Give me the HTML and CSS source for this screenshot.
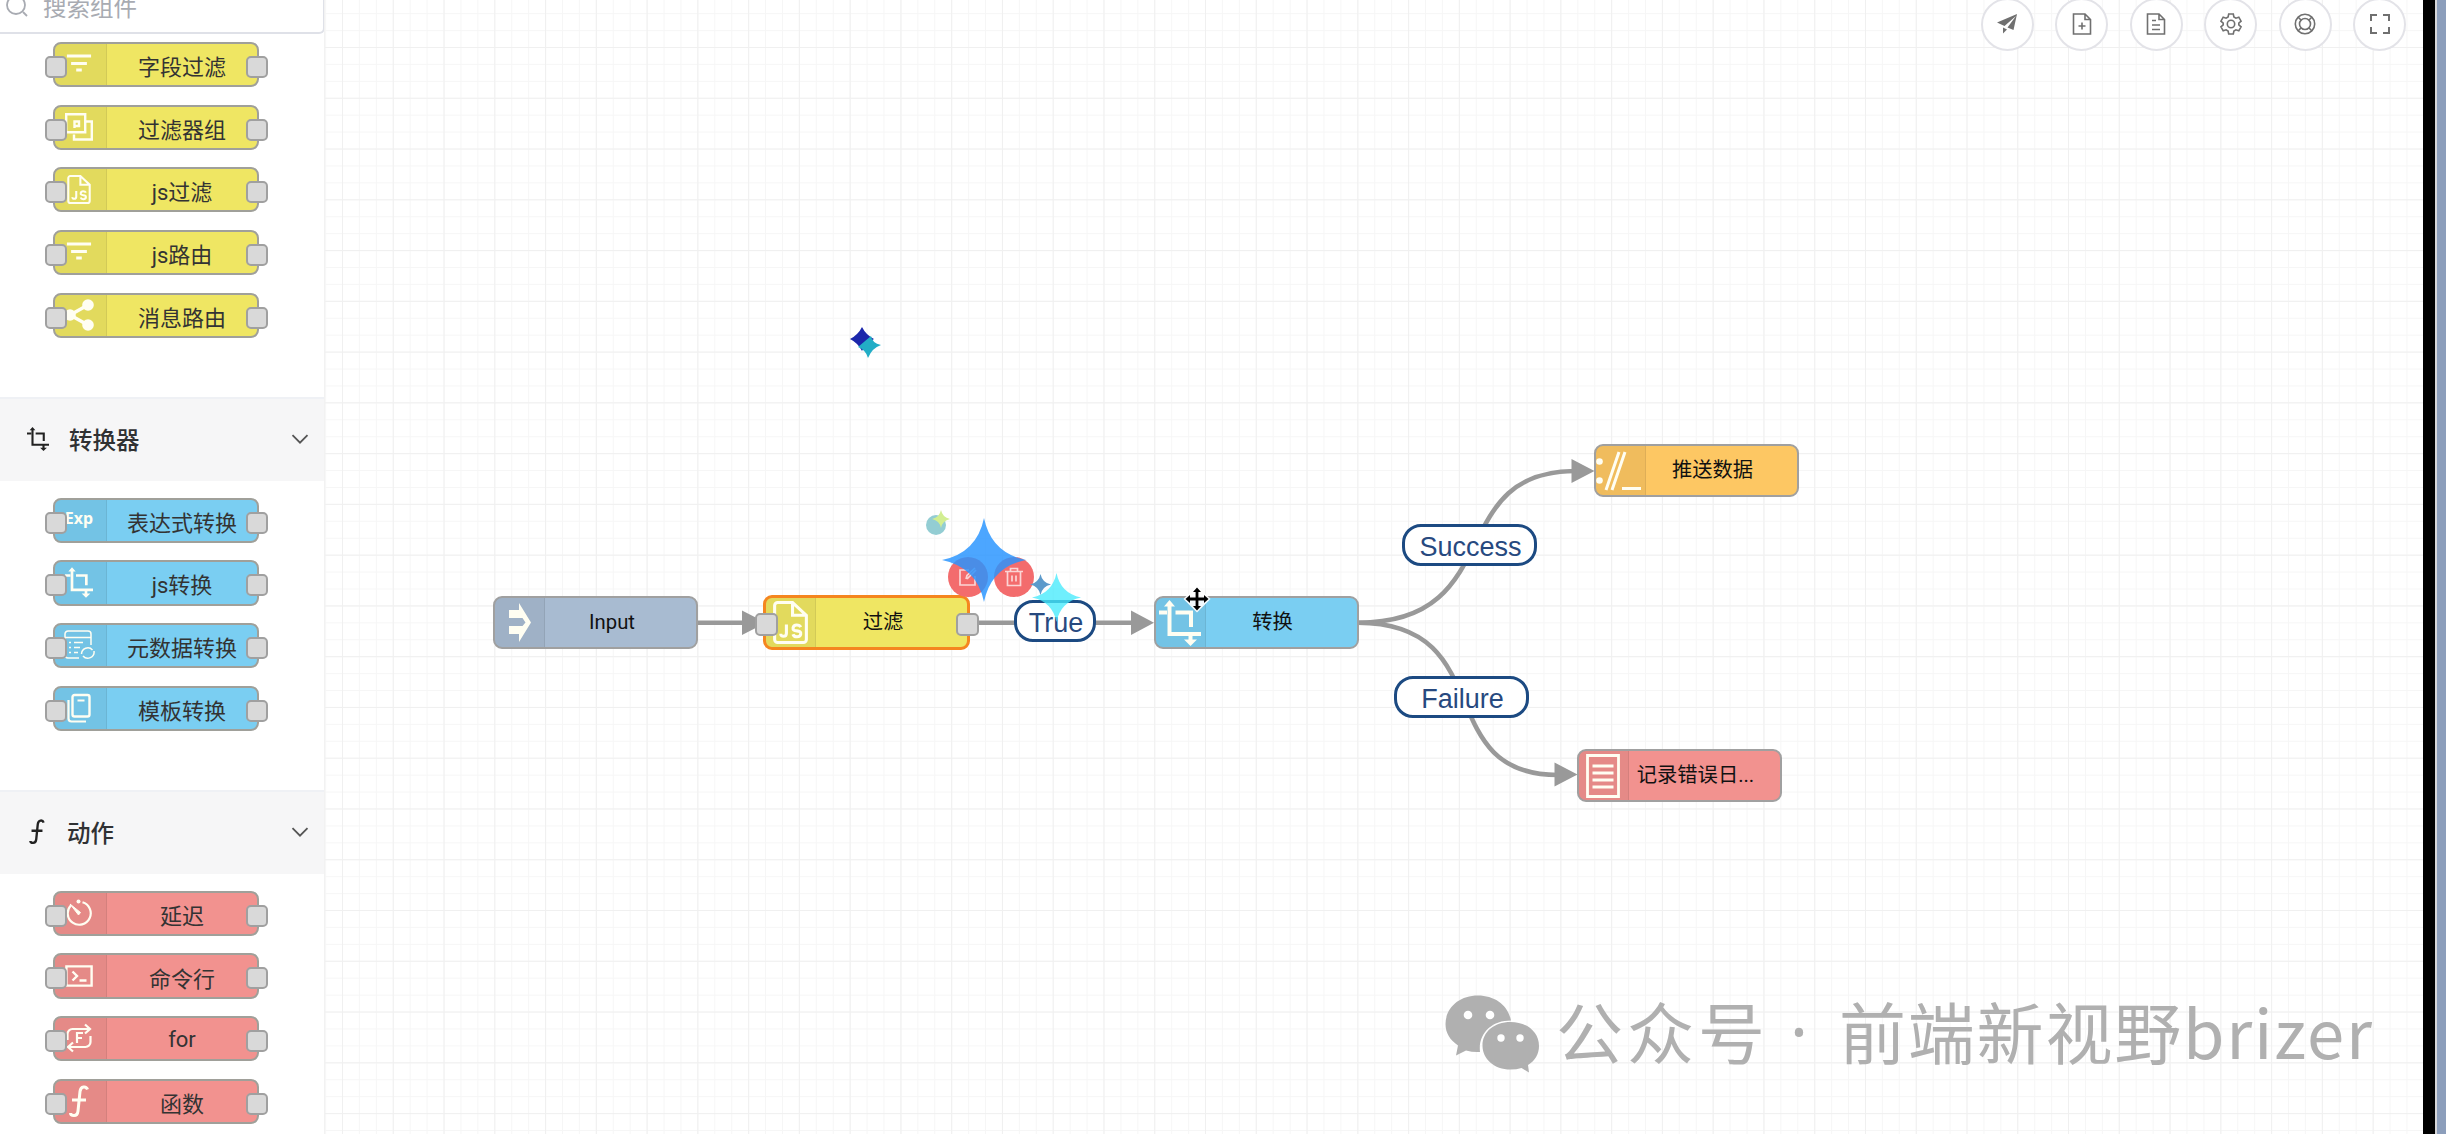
FILE: index.html
```html
<!DOCTYPE html>
<html lang="zh-CN">
<head>
    <meta charset="UTF-8">
    <meta name="viewport" content="width=device-width, initial-scale=1.0">
    <title>规则链编排</title>
    <link rel="stylesheet" href="styles.css">
</head>
<body>
    <!-- 图标定义 -->
    <svg class="defs" width="0" height="0">
        <symbol id="i-filter" viewBox="0 0 28 28"><path d="M1 5.500h26M5.500 13.500h17M11 20.500h6" fill="none" stroke="currentColor" stroke-width="3.200"/></symbol>
        <symbol id="i-group" viewBox="0 0 28 28"><path d="M1.200 1.200h19v18h-19zM21 8.500h5.800v18H9v-5M9.500 15V8.500H14V13H10" fill="none" stroke="currentColor" stroke-width="2.400"/></symbol>
        <symbol id="i-js" viewBox="0 0 34 42"><path d="M5 1.500h14L32.500 14v23.500a3 3 0 0 1-3 3H4.500a3 3 0 0 1-3-3v-33a3 3 0 0 1 3-3zM19 1.500V14h13" fill="none" stroke="currentColor" stroke-width="3"/><path d="M13 23v8.500q0 3-2.800 3T7.500 32M27 25.500q-1-2-4-2t-3.500 2.700 3.700 3 3.800 3-3.600 2.800-4-2.500" fill="none" stroke="currentColor" stroke-width="3"/></symbol>
        <symbol id="i-share" viewBox="0 0 30 32"><path d="M6 16L24 6M6 16l18 10" stroke="currentColor" stroke-width="3.500"/><circle cx="6" cy="16" r="5.800" fill="currentColor"/><circle cx="24" cy="6" r="5.800" fill="currentColor"/><circle cx="24" cy="26" r="5.800" fill="currentColor"/></symbol>
        <symbol id="i-crop" viewBox="0 0 42 46"><path d="M10.500 4v30H42M0 12.500h8M16.500 12.500H32V27M31.500 34v8" fill="none" stroke="currentColor" stroke-width="4"/><path d="M5 6.500L10.500 0 16 6.500zM25 39.500h13L31.500 46z" fill="currentColor"/></symbol>
        <symbol id="i-meta" viewBox="0 0 32 30"><path d="M16 28H5a3 3 0 0 1-3-3V4a3 3 0 0 1 3-3h20a3 3 0 0 1 3 3v11M2 7.500h26M6 12.500h2M11 12.500h9M6 17.500h2M11 17.500h6M6 22.500h2M11 22.500h4" fill="none" stroke="currentColor" stroke-width="1.500"/><path d="M18.500 24a6.300 6.300 0 0 1 11-4M31 21a6.300 6.300 0 0 1-11 5" fill="none" stroke="currentColor" stroke-width="1.500"/></symbol>
        <symbol id="i-copy" viewBox="0 0 24 30"><rect x="5.500" y="2" width="17" height="21.500" rx="2" fill="none" stroke="currentColor" stroke-width="2.400"/><path d="M1.500 7v18.500a3 3 0 0 0 3 3H19M10.500 7.500h7" fill="none" stroke="currentColor" stroke-width="2.200"/></symbol>
        <symbol id="i-timer" viewBox="0 0 28 28"><path d="M17.500 3.200a11.500 11.500 0 1 1-11.500 3" fill="none" stroke="currentColor" stroke-width="2.200"/><path d="M5 5l10.500 8.500-2 2.500z" fill="currentColor" stroke="currentColor"/><circle cx="13.500" cy="2.500" r="2" fill="currentColor"/></symbol>
        <symbol id="i-cmd" viewBox="0 0 28 24"><path d="M1.400 2.400h25.200v19.200H1.400zM7.500 7.500l4.500 4.500-4.500 4.500M14.500 16.500h7" fill="none" stroke="currentColor" stroke-width="2.400"/></symbol>
        <symbol id="i-for" viewBox="0 0 28 30"><path d="M2.500 17v-6a5 5 0 0 1 5-5H24M20 1.500L25 6l-5 4.500M25.500 13v6a5 5 0 0 1-5 5H4M8 19.500L3 24l5 4.500M12 20V10h6M12 15h5" fill="none" stroke="currentColor" stroke-width="2.200"/></symbol>
        <symbol id="i-func" viewBox="0 0 20 32"><path d="M18.500 4.500q-1-3-4-2.500t-3.500 4.500L9 26q-.5 4.500-4 4.500T1.500 28M3 15h14" fill="none" stroke="currentColor" stroke-width="3"/></symbol>
        <symbol id="i-input" viewBox="0 0 22 39"><path d="M0 7h10V0l12 19.500L10 39v-8H0v-8h13.500l3-3.500-3-4.500H0z" fill="currentColor"/></symbol>
        <symbol id="i-push" viewBox="0 0 46 40"><circle cx="3.500" cy="10.500" r="3.300" fill="currentColor"/><circle cx="3.500" cy="29.500" r="3.300" fill="currentColor"/><path d="M10 39L23 1M16 39L29 1M26 37.500h19" stroke="currentColor" stroke-width="3"/></symbol>
        <symbol id="i-log" viewBox="0 0 34 44"><path d="M1.500 1.500h31v41h-31zM6.500 12h21M6.500 19h21M6.500 26h21M6.500 33h21" fill="none" stroke="currentColor" stroke-width="2.800"/></symbol>
        <symbol id="i-arrow" viewBox="0 0 18 10"><path d="M1.500 1.200L9 8.700l7.500-7.500" fill="none" stroke="currentColor" stroke-width="1.800"/></symbol>
        <symbol id="i-star" viewBox="-10 -10 20 20"><path d="M0-10Q1.700-1.700 10 0 1.700 1.700 0 10-1.700 1.700-10 0-1.700-1.700 0-10z" fill="currentColor"/></symbol>
    </svg>

    <aside class="sidebar">
        <div class="search">
            <svg width="22" height="22" viewBox="0 0 22 22"><path d="M17 17l4 4" stroke="currentColor" stroke-width="1.800"/><circle cx="10" cy="10" r="9" fill="none" stroke="currentColor" stroke-width="1.800"/></svg>
            <span>搜索组件</span>
        </div>

        <div class="group yellow first">
            <div class="item"><span class="pane"><svg width="26" height="26"><use href="#i-filter"/></svg></span><span class="name">字段过滤</span></div>
            <div class="item"><span class="pane"><svg width="28" height="28"><use href="#i-group"/></svg></span><span class="name">过滤器组</span></div>
            <div class="item"><span class="pane"><svg width="24" height="29"><use href="#i-js"/></svg></span><span class="name">js过滤</span></div>
            <div class="item"><span class="pane"><svg width="26" height="26"><use href="#i-filter"/></svg></span><span class="name">js路由</span></div>
            <div class="item"><span class="pane"><svg width="30" height="32"><use href="#i-share"/></svg></span><span class="name">消息路由</span></div>
        </div>

        <div class="group-title">
            <svg class="title-icon" width="22" height="26"><use href="#i-crop"/></svg>
            <span>转换器</span>
            <svg class="fold" width="18" height="10"><use href="#i-arrow"/></svg>
        </div>
        <div class="group blue">
            <div class="item"><span class="pane exp">Exp</span><span class="name">表达式转换</span></div>
            <div class="item"><span class="pane"><svg width="28" height="31"><use href="#i-crop"/></svg></span><span class="name">js转换</span></div>
            <div class="item"><span class="pane"><svg width="32" height="30"><use href="#i-meta"/></svg></span><span class="name">元数据转换</span></div>
            <div class="item"><span class="pane"><svg width="24" height="30"><use href="#i-copy"/></svg></span><span class="name">模板转换</span></div>
        </div>

        <div class="group-title">
            <svg class="title-icon" width="20" height="25"><use href="#i-func"/></svg>
            <span>动作</span>
            <svg class="fold" width="18" height="10"><use href="#i-arrow"/></svg>
        </div>
        <div class="group red">
            <div class="item"><span class="pane"><svg width="28" height="28"><use href="#i-timer"/></svg></span><span class="name">延迟</span></div>
            <div class="item"><span class="pane"><svg width="28" height="24"><use href="#i-cmd"/></svg></span><span class="name">命令行</span></div>
            <div class="item"><span class="pane"><svg width="28" height="30"><use href="#i-for"/></svg></span><span class="name">for</span></div>
            <div class="item"><span class="pane"><svg width="20" height="32"><use href="#i-func"/></svg></span><span class="name">函数</span></div>
        </div>
    </aside>

    <main class="canvas">
        <div class="toolbar">
            <button><svg width="22" height="22" viewBox="0 0 22 22"><path d="M1 9.500L21 1l-3.500 16-6-2.500L20 3 8.500 13z" fill="currentColor"/><path d="M7 14.500l4 2L7 20.500z" fill="currentColor"/></svg></button>
            <button><svg width="22" height="22" viewBox="0 0 22 22"><path d="M2.500 1H14l5.500 5.500V21h-17zM14 1v5.500h5.500M11 9.500v7M7.500 13h7" fill="none" stroke="currentColor" stroke-width="1.600"/></svg></button>
            <button><svg width="22" height="22" viewBox="0 0 22 22"><path d="M2.500 1H14l5.500 5.500V21h-17zM14 1v5.500h5.500M7 7.500h4M7 12h8M7 16.500h8" fill="none" stroke="currentColor" stroke-width="1.600"/></svg></button>
            <button><svg width="22" height="22" viewBox="0 0 22 22"><path d="M8.700 1h4.600l.6 3 2 1.200 2.900-1 2.300 4-2.300 1.900v1.800l2.300 1.900-2.300 4-2.900-1-2 1.200-.6 3H8.700l-.6-3-2-1.200-2.900 1-2.300-4 2.300-1.900v-1.800L.9 8.200l2.300-4 2.900 1 2-1.200z" fill="none" stroke="currentColor" stroke-width="1.600"/><circle cx="11" cy="11" r="3.700" fill="none" stroke="currentColor" stroke-width="1.600"/></svg></button>
            <button><svg width="22" height="22" viewBox="0 0 22 22"><g fill="none" stroke="currentColor" stroke-width="1.600"><circle cx="11" cy="11" r="9.700"/><circle cx="11" cy="11" r="5.500"/><path d="M4 4l3.200 3.200M18 4l-3.200 3.200M4 18l3.200-3.200M18 18l-3.200-3.200"/></g></svg></button>
            <button><svg width="22" height="22" viewBox="0 0 22 22"><path d="M2 8V2h6M14 2h6v6M20 14v6h-6M8 20H2v-6" fill="none" stroke="currentColor" stroke-width="2"/></svg></button>
        </div>

        <!-- 连线 -->
        <svg class="edges" width="2098" height="1134" viewBox="325 0 2098 1134">
            <g fill="none" stroke="#999" stroke-width="4.600">
                <path d="M698 622.700h50"/>
                <path d="M968 622.700h168"/>
                <path d="M1358 622.700C1508 622.700 1444 471 1575 471"/>
                <path d="M1358 622.700C1500 622.700 1430 775 1558 775"/>
            </g>
            <path d="M742 610.500l24 12.200-24 12.200zM1131 610.500l23 12.200-23 12.200zM1571.500 459l23 12-23 12zM1554.500 762.500l23 12-23 12z" fill="#999"/>
        </svg>

        <div class="node gray n-input"><span class="pane"><svg width="22" height="39"><use href="#i-input"/></svg></span><span class="name">Input</span></div>
        <div class="node yellow selected n-filter"><span class="pane"><svg width="35" height="43"><use href="#i-js"/></svg></span><span class="name">过滤</span></div>
        <div class="node blue n-trans"><span class="pane"><svg width="42" height="46"><use href="#i-crop"/></svg></span><span class="name">转换</span></div>
        <div class="node orange n-push"><span class="pane"><svg width="46" height="40"><use href="#i-push"/></svg></span><span class="name">推送数据</span></div>
        <div class="node red n-log"><span class="pane"><svg width="34" height="44"><use href="#i-log"/></svg></span><span class="name">记录错误日...</span></div>

        <div class="label l-true">True</div>
        <div class="label l-success">Success</div>
        <div class="label l-failure">Failure</div>

        <div class="action a-edit"><svg width="20" height="20" viewBox="0 0 20 20"><path d="M11 3H2v15h15V9M8 12l1-3.500L17 1M9 12l9-9" fill="none" stroke="currentColor" stroke-width="1.700"/></svg></div>
        <div class="action a-del"><svg width="20" height="20" viewBox="0 0 20 20"><path d="M1 4.500h18M6.500 4V1.500h7V4M3.500 4.500v14h13v-14M8 8.500v6M12 8.500v6" fill="none" stroke="currentColor" stroke-width="1.700"/></svg></div>

        <!-- 鼠标点击特效 -->
        <svg class="spark s-big"><use href="#i-star"/></svg>
        <svg class="spark s-cyan"><use href="#i-star"/></svg>
        <svg class="spark s-small"><use href="#i-star"/></svg>
        <span class="spark s-dot"></span>
        <svg class="spark s-lime"><use href="#i-star"/></svg>
        <svg class="spark s-navy" viewBox="-12 -12 24 24"><path d="M0-12Q4-4 12 0 4 4 0 12-4 4-12 0-4-4 0-12z" fill="currentColor"/></svg>
        <svg class="spark s-teal" viewBox="-13 -13 26 26"><path d="M3-9Q4-2 13 0 4 3 0 13-2 5-10 2z" fill="currentColor"/></svg>

        <svg class="cursor" width="28" height="28" viewBox="-14 -14 28 28"><path d="M0-13.500L13.500 0 0 13.500-13.500 0z" fill="#fff" fill-opacity=".9"/><path d="M0-9V9M-9 0H9" stroke="#000" stroke-width="2.800"/><path d="M0-11.500L4-7h-8zM0 11.500L4 7h-8zM-11.500 0L-7-4v8zM11.500 0L7-4v8z" fill="#000"/></svg>

        <div class="watermark">
            <svg width="95" height="78" viewBox="0 0 95 78"><path d="M33 .5C14 .5.5 13 .5 29c0 9 4.500 16 12.500 21.500L11 60.500l10-5q7 2 14 1.500C33 38 47 25.500 66 25.500 63 10 49.500.5 33 .5z" fill="currentColor"/><path d="M65.500 27C49 27 37.500 37 37.500 50.500S49 74.500 65.500 74.500q6 0 11-1.500l7.500 4.500-1-7.500c7-4 11-11 11-19C94 37 82 27 65.500 27z" fill="currentColor"/><g fill="#fff"><circle cx="23" cy="20" r="4.300"/><circle cx="45" cy="20" r="4.300"/><circle cx="56" cy="43" r="3.700"/><circle cx="75" cy="43" r="3.700"/></g></svg>
            <span class="wm-type">公众号</span>
            <span class="wm-dot">·</span>
            <span class="wm-name">前端新视野brizer</span>
        </div>
    </main>
    <div class="edge-bar"></div>
</body>
</html>
```

FILE: styles.css
```css
* {
    box-sizing: border-box;
}

body {
    margin: 0;
    height: 1134px;
    display: flex;
    overflow: hidden;
    background: #fff;
    font-family: "Liberation Sans", "Noto Sans CJK SC", sans-serif;
}

svg {
    display: block;
    flex: none;
}

.defs {
    position: absolute;
}

/* 左侧组件面板 */
.sidebar {
    width: 325px;
    height: 100%;
    overflow: hidden;
    flex: none;
    border-right: 1px solid #f2f2f2;
}

.search {
    height: 54px;
    margin-top: -20px;
    width: 325px;
    padding: 0 0 2px 6px;
    display: flex;
    align-items: center;
    gap: 15px;
    border: 2px solid #dfe1e8;
    border-left: none;
    border-radius: 0 6px 6px 0;
    color: #a8abb2;
    font-size: 23.5px;
}

.group {
    padding: 17px 0 59.5px 52.5px;
    display: flex;
    flex-direction: column;
    gap: 17.6px;
}

.group.first {
    padding-top: 8px;
}

.item {
    position: relative;
    width: 206px;
    height: 45.1px;
    display: flex;
    border: 2px solid #a0a09a;
    border-radius: 8px;
    color: #333;
    font-size: 22px;
}

/* 两侧锚点 */
.item::before,
.item::after,
.selected::before,
.selected::after {
    content: "";
    position: absolute;
    top: 12px;
    left: -10px;
    width: 18px;
    height: 18px;
    border: 2px solid #a0a0a0;
    border-radius: 5px;
    background: #d9d9d9;
}

.item::after {
    left: auto;
    right: -11px;
}

.pane {
    width: 52px;
    flex: none;
    display: flex;
    align-items: center;
    justify-content: center;
    border-right: 1px solid rgba(0, 0, 0, .08);
    border-radius: 6px 0 0 6px;
    background: rgba(0, 0, 0, .05);
    color: #fffef2;
}

.item .pane {
    padding: 0 2px 1px 0;
}

.pane.exp {
    padding-bottom: 4px;
    font: bold 16px "Noto Sans", sans-serif;
}

.name {
    flex: 1;
    display: flex;
    align-items: center;
    justify-content: center;
    font-family: Roboto, "Noto Sans CJK SC", sans-serif;
    white-space: nowrap;
}

.item .name {
    padding: 1px 0 0 1px;
}

.yellow .item, .node.yellow { background: #efe663; }
.blue .item, .node.blue { background: #7acef2; }
.red .item, .node.red { background: #f2928f; }
.node.gray { background: #a8bbd1; }
.node.orange { background: #fdc763; }

.group-title {
    height: 83.4px;
    padding: 0 15px 3px 27px;
    display: flex;
    align-items: center;
    background: #f6f6f7;
    border-top: 2px solid #eff1f5;
    color: #303133;
    font-size: 23.5px;
    font-weight: 500;
}

.title-icon {
    margin-right: 20px;
    color: #222;
}

.fold {
    margin-left: auto;
    color: #555;
}

/* 画布 */
.canvas {
    position: relative;
    flex: 1;
    height: 100%;
    overflow: hidden;
    background-color: #fff;
    background-image:
        linear-gradient(to right, #f0f0f0 1px, transparent 1px),
        linear-gradient(to bottom, #f0f0f0 1px, transparent 1px),
        linear-gradient(to right, #f6f6f6 1px, transparent 1px),
        linear-gradient(to bottom, #f6f6f6 1px, transparent 1px);
    background-size: 50.780px 50.780px, 50.780px 50.780px, 16.927px 16.927px, 16.927px 16.927px;
    background-position: 17px 47px, 17px 47px, 17px 47px, 17px 47px;
}

.toolbar {
    height: 50.500px;
    padding-right: 17px;
    display: flex;
    justify-content: flex-end;
    align-items: flex-end;
    gap: 21.500px;
}

.toolbar button {
    width: 53px;
    height: 53px;
    flex: none;
    padding: 0;
    display: flex;
    align-items: center;
    justify-content: center;
    border: 2px solid #e3e3e8;
    border-radius: 50%;
    background: #fff;
    color: #707070;
}

.edges {
    position: absolute;
    left: 0;
    top: 0;
}

.node {
    position: absolute;
    width: 205px;
    height: 53px;
    display: flex;
    border: 2px solid #a0a0a0;
    border-radius: 9px;
    color: #111;
    font-size: 20.3px;
}

.node .pane {
    width: 50px;
}

.node .name {
    padding: 0 17px 6px 0;
}

.node.n-input .name {
    padding-bottom: 1px;
}

.n-input { left: 168px; top: 596px; }
.n-filter { left: 438px; top: 595px; }
.n-trans { left: 828.5px; top: 596px; }
.n-push { left: 1268.5px; top: 444px; }
.n-log { left: 1251.5px; top: 749px; }

.n-push .pane { padding-right: 2px; }

.selected {
    width: 207px;
    height: 55px;
    border: 3px solid #f5861f;
}

.selected::before,
.selected::after {
    top: 15px;
    left: -11px;
    width: 19px;
    height: 19px;
}

.selected::after {
    left: auto;
    right: -12px;
}

.label {
    position: absolute;
    height: 42px;
    width: 135px;
    display: flex;
    align-items: center;
    justify-content: center;
    padding-left: 2px;
    padding-top: 4px;
    border: 3px solid #1c4a82;
    border-radius: 19px;
    background: #fff;
    color: #27497f;
    font-size: 27px;
}

.l-true { left: 689px; top: 600px; width: 82px; }
.l-success { left: 1077px; top: 524px; }
.l-failure { left: 1069px; top: 676px; }

.action {
    position: absolute;
    width: 40px;
    height: 40px;
    display: flex;
    align-items: center;
    justify-content: center;
    border-radius: 50%;
    background: #f36c6d;
    color: #fbd5d5;
}

.a-edit { left: 623px; top: 557px; }
.a-del { left: 669px; top: 557px; }

/* 点击特效 */
.spark {
    position: absolute;
}

.s-big { left: 617px; top: 518px; width: 84px; height: 84px; color: rgba(40, 148, 255, .83); }
.s-cyan { left: 707px; top: 573px; width: 49px; height: 49px; color: rgba(70, 235, 252, .78); }
.s-small { left: 705px; top: 574px; width: 21px; height: 21px; color: #5c9acb; }
.s-dot { left: 601px; top: 515px; width: 20px; height: 20px; border-radius: 50%; background: #93cdd3; }
.s-lime { left: 607px; top: 509px; width: 18px; height: 20px; color: #d2ee91; }
.s-navy { left: 525px; top: 327px; width: 24px; height: 24px; color: #1b27ab; }
.s-teal { left: 530px; top: 332px; width: 26px; height: 26px; color: #22adc6; }

.cursor {
    position: absolute;
    left: 858px;
    top: 585px;
}

/* 公众号水印 */
.watermark {
    position: absolute;
    left: 1120px;
    top: 995px;
    display: flex;
    align-items: center;
    color: #b0b0b0;
    font-family: "Noto Sans CJK SC", sans-serif;
    font-size: 67px;
    line-height: 70px;
    white-space: nowrap;
}

.watermark span {
    padding-bottom: 8px;
}

.wm-type {
    margin-left: 16px;
    letter-spacing: 4px;
}

.watermark .wm-dot {
    width: 60px;
    font-family: "Noto Sans", sans-serif;
    text-align: center;
}

.wm-name {
    margin-left: 10px;
    letter-spacing: 1.8px;
}

/* 窗口右侧边缘 */
.edge-bar {
    width: 23px;
    height: 100%;
    flex: none;
    background: #8c9ebb;
    border-left: 12px solid #000;
    box-shadow: inset 2px 0 0 #d5d5d8;
}
```
